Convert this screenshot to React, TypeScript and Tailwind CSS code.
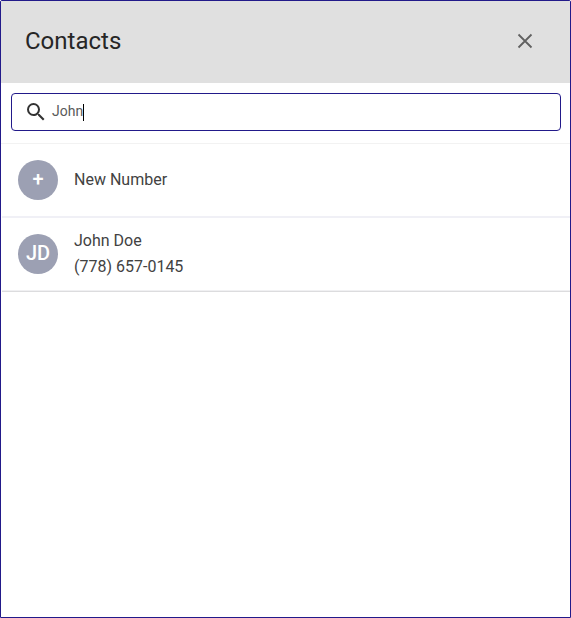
import React, { useState } from 'react';

interface Contact {
  name: string;
  phone: string;
  initials: string;
}

const contacts: Contact[] = [
  { name: 'John Doe', phone: '(778) 657-0145', initials: 'JD' },
];

function CloseIcon() {
  return (
    <svg width="24" height="24" viewBox="0 0 24 24" fill="none" stroke="#616161" strokeWidth="1.8">
      <path d="M5.5 5.5l13 13M18.5 5.5l-13 13" />
    </svg>
  );
}

function SearchIcon() {
  return (
    <svg width="24" height="24" viewBox="0 0 24 24" fill="#333">
      <path d="M15.5 14h-.79l-.28-.27A6.471 6.471 0 0 0 16 9.5 6.5 6.5 0 1 0 9.5 16c1.61 0 3.09-.59 4.23-1.57l.27.28v.79l5 4.99L20.49 19l-4.99-5zm-6 0C7.01 14 5 11.99 5 9.5S7.01 5 9.5 5 14 7.01 14 9.5 11.99 14 9.5 14z" />
    </svg>
  );
}

function Avatar({ label }: { label: string }) {
  return (
    <div className="flex h-10 w-10 shrink-0 items-center justify-center rounded-full bg-[#9ca0b3] pb-0.5 text-xl font-medium text-white">
      {label}
    </div>
  );
}

function App() {
  const [query] = useState('John');

  const results = contacts.filter((contact) =>
    contact.name.toLowerCase().includes(query.toLowerCase())
  );

  return (
    <div className="h-screen rounded-t-[2px] border border-[#221a8a] bg-white font-[Roboto,sans-serif] text-[#424242]">
      {/* Header */}
      <div className="flex h-[82px] items-center justify-between bg-[#e0e0e0] pr-[33px] pb-0.5 pl-6">
        <h2 className="text-2xl text-[#262626]">Contacts</h2>
        <button type="button" aria-label="Close">
          <CloseIcon />
        </button>
      </div>

      {/* Search */}
      <div className="border-b border-[#f2f2f2] px-[9px] pt-[10px] pb-3">
        <div className="ml-px flex h-[38px] items-center rounded border border-[#221a8a] pl-3">
          <SearchIcon />
          <span className="ml-1 pb-0.5 text-sm text-[#5a5a5a]">{query}</span>
          <span className="h-[17px] w-px bg-black" />
        </div>
      </div>

      {/* Results */}
      <div className="ml-px">
        <div className="flex h-[74px] items-center gap-4 border-b-2 border-[#f0f0f6] pl-4">
          <Avatar label="+" />
          <span>New Number</span>
        </div>
        {results.map((contact) => (
          <div
            key={contact.phone}
            className="flex h-[74px] items-center gap-4 border-b border-[#dcdcde] pb-px pl-4 shadow-[inset_0_-1px_0_#f0f0f2]"
          >
            <Avatar label={contact.initials} />
            <div className="leading-[26px]">
              <div>{contact.name}</div>
              <div>{contact.phone}</div>
            </div>
          </div>
        ))}
      </div>
    </div>
  );
}

export default App;
